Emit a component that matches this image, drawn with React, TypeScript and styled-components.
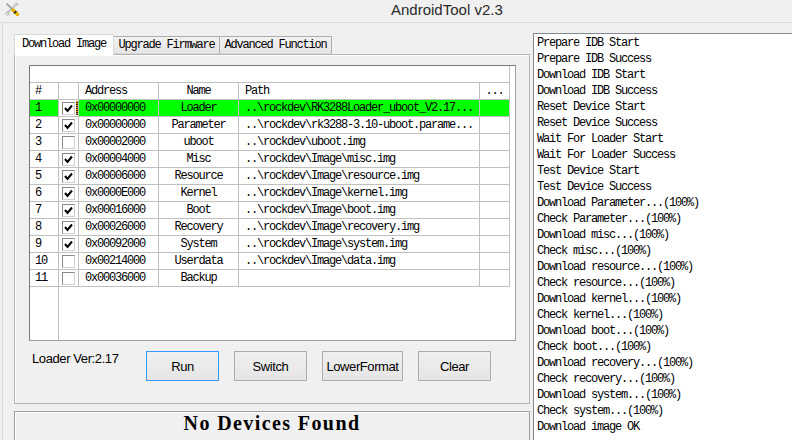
import React from "react";
import styled, { createGlobalStyle } from "styled-components";

const MONO = `"Liberation Mono", "DejaVu Sans Mono", monospace`;
const SANS = `"Liberation Sans", Arial, sans-serif`;
const SERIF = `"Liberation Serif", "Times New Roman", serif`;

const Global = createGlobalStyle`
  html, body { margin: 0; padding: 0; background: #f0f0f0; }
  body { width: 792px; height: 440px; overflow: hidden; }
  *, *::before, *::after { box-sizing: border-box; }
`;

const Window = styled.div`
  width: 792px;
  height: 440px;
  overflow: hidden;
  background: #f0f0f0;
  display: flex;
  flex-direction: column;
`;

const TitleBar = styled.div`
  height: 23px;
  flex: none;
  display: flex;
  align-items: flex-start;
  border-bottom: 1px solid #dadada;
`;

const AppIcon = styled.svg`
  flex: none;
  margin: 2px 0 0 5px;
`;

const Title = styled.div`
  margin-left: 372px;
  font: 15px/20px ${SANS};
  color: #2b2b2b;
  white-space: nowrap;
`;

const Body = styled.div`
  flex: 1;
  min-height: 0;
  display: flex;
  margin-left: 2px;
  border-left: 1px solid #dadada;
`;

const LeftCol = styled.div`
  width: 530px;
  flex: none;
  padding: 11px 0 0 11px;
  display: flex;
  flex-direction: column;
`;

const TabRow = styled.div`
  height: 20px;
  display: flex;
  align-items: flex-end;
  position: relative;
  z-index: 2;
`;

const Tab = styled.div<{ $active?: boolean; $w: number }>`
  width: ${(p) => p.$w}px;
  height: ${(p) => (p.$active ? 21 : 18)}px;
  margin-bottom: ${(p) => (p.$active ? -1 : 0)}px;
  margin-left: -1px;
  &:first-child { margin-left: 0; }
  border: 1px solid ${(p) => (p.$active ? "#d9d9d9" : "#acacac")};
  border-bottom: ${(p) => (p.$active ? "none" : "1px solid #d9d9d9")};
  background: ${(p) => (p.$active ? "#ffffff" : "linear-gradient(#f2f2f2, #e5e5e5)")};
  font: 12px/${(p) => (p.$active ? 19 : 16)}px ${MONO};
  letter-spacing: -1.2px;
  text-align: center;
  color: #000;
  white-space: nowrap;
  position: relative;
  z-index: ${(p) => (p.$active ? 2 : 1)};
`;

const Panel = styled.div`
  width: 516px;
  height: 350px;
  flex: none;
  border: 1px solid #b4b4b4;
  box-shadow: inset 1px 1px 0 #ffffff;
  background: #f0f0f0;
  padding: 10px 0 0 14px;
  display: flex;
  flex-direction: column;
`;

const ListView = styled.div`
  width: 487px;
  height: 276px;
  background: #ffffff;
  border: 1px solid #a0a0a0;
  border-top-color: #7a7a7a;
  border-left-color: #7a7a7a;
  display: flex;
  flex-direction: column;
  font: 12px/16px ${MONO};
  letter-spacing: -1.2px;
  color: #000;
`;

const Strip = styled.div`
  width: 480px;
  height: 17px;
  flex: none;
  border-right: 1px solid #c0c0c0;
  border-bottom: 1px solid #c0c0c0;
`;

const COLS = "29px 20px 80px 80px 241px 30px";

const GridRow = styled.div<{ $sel?: boolean }>`
  display: grid;
  grid-template-columns: ${COLS};
  width: 480px;
  height: 17px;
  flex: none;
  background: ${(p) => (p.$sel ? "#00ff00" : "#ffffff")};
`;

const Cell = styled.div<{ $align?: "left" | "center"; $pad?: number }>`
  border-right: 1px solid #c0c0c0;
  border-bottom: 1px solid #c0c0c0;
  text-align: ${(p) => p.$align ?? "left"};
  padding-left: ${(p) => p.$pad ?? 0}px;
  line-height: 16px;
  white-space: nowrap;
  overflow: hidden;
`;

const CheckCell = styled.div<{ $focus?: boolean }>`
  position: relative;
  background: #ffffff;
  border-right: 1px solid #c0c0c0;
  border-bottom: 1px solid #c0c0c0;
  display: flex;
  align-items: center;
  padding-left: 3px;
  &::after {
    content: "";
    display: ${(p) => (p.$focus ? "block" : "none")};
    position: absolute;
    right: 0;
    top: 1px;
    bottom: 1px;
    width: 2px;
    background: repeating-linear-gradient(#e08a00 0 1px, #2a2a2a 1px 2px);
  }
`;

const Box = styled.div`
  width: 13px;
  height: 13px;
  border: 1px solid #8a8a8a;
  border-right-color: #d0d0d0;
  border-bottom-color: #d0d0d0;
  background: #ffffff;
  display: flex;
  align-items: center;
  justify-content: center;
`;

const Filler = styled.div`
  flex: 1;
  display: grid;
  grid-template-columns: 29px 1fr;
`;

const FillerFixed = styled.div`
  border-right: 1px solid #c0c0c0;
`;

const Controls = styled.div`
  display: flex;
  align-items: flex-start;
  margin-top: 10px;
`;

const LoaderLabel = styled.div`
  width: 117px;
  flex: none;
  padding-left: 3px;
  font: 13px/15px ${SANS};
  letter-spacing: -0.4px;
  color: #000;
`;

const Buttons = styled.div`
  display: flex;
  gap: 15px;
`;

const Button = styled.button<{ $w: number; $focused?: boolean }>`
  width: ${(p) => p.$w}px;
  height: 30px;
  padding: 0;
  border: 1px solid ${(p) => (p.$focused ? "#3399ff" : "#acacac")};
  background: linear-gradient(#f0f0f0, #e5e5e5);
  font: 13px ${SANS};
  letter-spacing: -0.4px;
  color: #000;
`;

const Status = styled.div`
  flex: 1;
  width: 516px;
  margin-top: 7px;
  border: 1px solid #a0a0a0;
  border-bottom: none;
  box-shadow: inset 1px 1px 0 #ffffff;
  font: bold 20px/20px ${SERIF};
  letter-spacing: 1.4px;
  text-align: center;
  color: #000;
  padding-top: 1px;
`;

const Log = styled.div`
  flex: 1;
  margin-top: 10px;
  border: 1px solid #828790;
  border-right: none;
  border-bottom: none;
  background: #ffffff;
  padding: 1px 0 0 3px;
  font: 12px/16px ${MONO};
  letter-spacing: -1.2px;
  color: #000;
  white-space: nowrap;
  overflow: hidden;
`;

const Check = () => (
  <svg width="9" height="9" viewBox="0 0 9 9">
    <polyline points="1,4 3.5,7 8,1.5" fill="none" stroke="#000" strokeWidth="2" />
  </svg>
);

const rows: [number, boolean, string, string, string][] = [
  [1, true, "0x00000000", "Loader", "..\\rockdev\\RK3288Loader_uboot_V2.17..."],
  [2, true, "0x00000000", "Parameter", "..\\rockdev\\rk3288-3.10-uboot.parame..."],
  [3, false, "0x00002000", "uboot", "..\\rockdev\\uboot.img"],
  [4, true, "0x00004000", "Misc", "..\\rockdev\\Image\\misc.img"],
  [5, true, "0x00006000", "Resource", "..\\rockdev\\Image\\resource.img"],
  [6, true, "0x0000E000", "Kernel", "..\\rockdev\\Image\\kernel.img"],
  [7, true, "0x00016000", "Boot", "..\\rockdev\\Image\\boot.img"],
  [8, true, "0x00026000", "Recovery", "..\\rockdev\\Image\\recovery.img"],
  [9, true, "0x00092000", "System", "..\\rockdev\\Image\\system.img"],
  [10, false, "0x00214000", "Userdata", "..\\rockdev\\Image\\data.img"],
  [11, false, "0x00036000", "Backup", ""],
];

const logLines = [
  "Prepare IDB Start",
  "Prepare IDB Success",
  "Download IDB Start",
  "Download IDB Success",
  "Reset Device Start",
  "Reset Device Success",
  "Wait For Loader Start",
  "Wait For Loader Success",
  "Test Device Start",
  "Test Device Success",
  "Download Parameter...(100%)",
  "Check Parameter...(100%)",
  "Download misc...(100%)",
  "Check misc...(100%)",
  "Download resource...(100%)",
  "Check resource...(100%)",
  "Download kernel...(100%)",
  "Check kernel...(100%)",
  "Download boot...(100%)",
  "Check boot...(100%)",
  "Download recovery...(100%)",
  "Check recovery...(100%)",
  "Download system...(100%)",
  "Check system...(100%)",
  "Download image OK",
];

const tabs = [
  { label: "Download Image", w: 100, active: true },
  { label: "Upgrade Firmware", w: 107 },
  { label: "Advanced Function", w: 113 },
];

const buttons = [
  { label: "Run", w: 73, focused: true },
  { label: "Switch", w: 73 },
  { label: "LowerFormat", w: 81 },
  { label: "Clear", w: 73 },
];

export default function App() {
  return (
    <Window>
      <Global />
      <TitleBar>
        <AppIcon width="14" height="14" viewBox="0 0 14 14">
          <line x1="12" y1="1.5" x2="2.5" y2="11" stroke="#c4c4c4" strokeWidth="2" />
          <circle cx="2.5" cy="11.5" r="1.6" fill="none" stroke="#b0b0b0" strokeWidth="1" />
          <path d="M10.5 0.5 L13.5 3.5" stroke="#c4c4c4" strokeWidth="1.5" />
          <line x1="1.5" y1="1.5" x2="8" y2="8" stroke="#8e8e8e" strokeWidth="1.4" />
          <line x1="8" y1="8" x2="13" y2="13" stroke="#e6b400" strokeWidth="3.4" strokeLinecap="round" />
          <line x1="9.6" y1="9.6" x2="10.8" y2="10.8" stroke="#2a2a2a" strokeWidth="3.4" />
        </AppIcon>
        <Title>AndroidTool v2.3</Title>
      </TitleBar>
      <Body>
        <LeftCol>
          <TabRow>
            {tabs.map((t) => (
              <Tab key={t.label} $w={t.w} $active={t.active}>
                {t.label}
              </Tab>
            ))}
          </TabRow>
          <Panel>
            <ListView>
              <Strip />
              <GridRow>
                <Cell $pad={5}>#</Cell>
                <Cell />
                <Cell $pad={6}>Address</Cell>
                <Cell $align="center">Name</Cell>
                <Cell $pad={6}>Path</Cell>
                <Cell $align="center">...</Cell>
              </GridRow>
              {rows.map(([n, checked, addr, name, path]) => (
                <GridRow key={n} $sel={n === 1}>
                  <Cell $pad={5}>{n}</Cell>
                  <CheckCell $focus={n === 1}>
                    <Box>{checked && <Check />}</Box>
                  </CheckCell>
                  <Cell $pad={6}>{addr}</Cell>
                  <Cell $align="center">{name}</Cell>
                  <Cell $pad={6}>{path}</Cell>
                  <Cell />
                </GridRow>
              ))}
              <Filler>
                <FillerFixed />
                <div />
              </Filler>
            </ListView>
            <Controls>
              <LoaderLabel>Loader Ver:2.17</LoaderLabel>
              <Buttons>
                {buttons.map((b) => (
                  <Button key={b.label} $w={b.w} $focused={b.focused}>
                    {b.label}
                  </Button>
                ))}
              </Buttons>
            </Controls>
          </Panel>
          <Status>No Devices Found</Status>
        </LeftCol>
        <Log>
          {logLines.map((l, i) => (
            <div key={i}>{l}</div>
          ))}
        </Log>
      </Body>
    </Window>
  );
}
